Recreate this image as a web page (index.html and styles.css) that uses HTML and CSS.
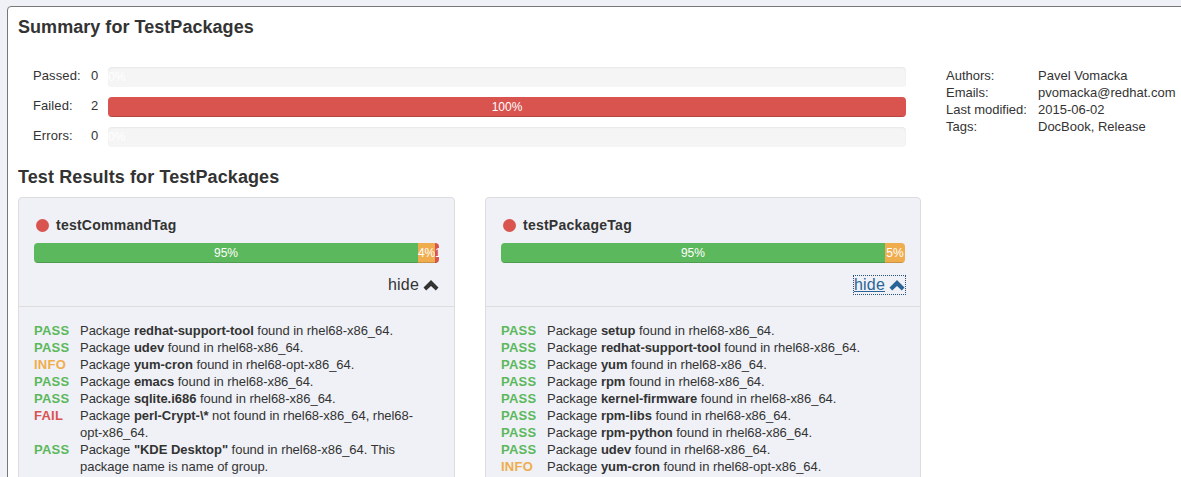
FILE: index.html
```html
<!DOCTYPE html>
<html>
<head>
<meta name="viewport" content="width=device-width, initial-scale=1">
<title>Summary for TestPackages</title>
<link rel="stylesheet" href="styles.css">
</head>
<body>

<div class="panel">
  <h3 class="summary-title">Summary for TestPackages</h3>

  <div class="summary">
    <div class="counts">
      <div class="count-row">
        <span class="count-label">Passed:</span>
        <span class="count-num">0</span>
        <div class="progress"><div class="bar bar-empty" style="width: 0%">0%</div></div>
      </div>
      <div class="count-row">
        <span class="count-label">Failed:</span>
        <span class="count-num">2</span>
        <div class="progress"><div class="bar bar-danger" style="width: 100%">100%</div></div>
      </div>
      <div class="count-row">
        <span class="count-label">Errors:</span>
        <span class="count-num">0</span>
        <div class="progress"><div class="bar bar-empty" style="width: 0%">0%</div></div>
      </div>
    </div>

    <div class="meta">
      <span>Authors:</span><span>Pavel Vomacka</span>
      <span>Emails:</span><span>pvomacka@redhat.com</span>
      <span>Last modified:</span><span>2015-06-02</span>
      <span>Tags:</span><span>DocBook, Release</span>
    </div>
  </div>

  <h3 class="results-title">Test Results for TestPackages</h3>

  <div class="cards">
    <div class="card">
      <div class="card-head">
        <h4 class="card-title"><span class="dot"></span>testCommandTag</h4>
        <div class="progress card-progress">
          <div class="bar bar-success" style="width: 94.8%">95%</div>
          <div class="bar bar-warning" style="width: 4.2%">4%</div>
          <div class="bar bar-danger" style="width: 1%">1%</div>
        </div>
        <div class="toggle">
          <a class="hide-link" href="#">hide <svg class="chevron" viewBox="0 0 16 11"><path d="M8 0 L15.5 7.5 L12.8 10.5 L8 6 L3.2 10.5 L0.5 7.5 Z"/></svg></a>
        </div>
      </div>
      <div class="card-body">
        <div class="result"><span class="status pass">PASS</span><p>Package <b>redhat-support-tool</b> found in rhel68-x86_64.</p></div>
        <div class="result"><span class="status pass">PASS</span><p>Package <b>udev</b> found in rhel68-x86_64.</p></div>
        <div class="result"><span class="status info">INFO</span><p>Package <b>yum-cron</b> found in rhel68-opt-x86_64.</p></div>
        <div class="result"><span class="status pass">PASS</span><p>Package <b>emacs</b> found in rhel68-x86_64.</p></div>
        <div class="result"><span class="status pass">PASS</span><p>Package <b>sqlite.i686</b> found in rhel68-x86_64.</p></div>
        <div class="result"><span class="status fail">FAIL</span><p>Package <b>perl-Crypt-\*</b> not found in rhel68-x86_64, rhel68-opt-x86_64.</p></div>
        <div class="result"><span class="status pass">PASS</span><p>Package <b>"KDE Desktop"</b> found in rhel68-x86_64. This package name is name of group.</p></div>
      </div>
    </div>

    <div class="card">
      <div class="card-head">
        <h4 class="card-title"><span class="dot"></span>testPackageTag</h4>
        <div class="progress card-progress">
          <div class="bar bar-success" style="width: 95%">95%</div>
          <div class="bar bar-warning" style="width: 5%">5%</div>
        </div>
        <div class="toggle">
          <a class="hide-link focused" href="#">hide <svg class="chevron" viewBox="0 0 16 11"><path d="M8 0 L15.5 7.5 L12.8 10.5 L8 6 L3.2 10.5 L0.5 7.5 Z"/></svg></a>
        </div>
      </div>
      <div class="card-body">
        <div class="result"><span class="status pass">PASS</span><p>Package <b>setup</b> found in rhel68-x86_64.</p></div>
        <div class="result"><span class="status pass">PASS</span><p>Package <b>redhat-support-tool</b> found in rhel68-x86_64.</p></div>
        <div class="result"><span class="status pass">PASS</span><p>Package <b>yum</b> found in rhel68-x86_64.</p></div>
        <div class="result"><span class="status pass">PASS</span><p>Package <b>rpm</b> found in rhel68-x86_64.</p></div>
        <div class="result"><span class="status pass">PASS</span><p>Package <b>kernel-firmware</b> found in rhel68-x86_64.</p></div>
        <div class="result"><span class="status pass">PASS</span><p>Package <b>rpm-libs</b> found in rhel68-x86_64.</p></div>
        <div class="result"><span class="status pass">PASS</span><p>Package <b>rpm-python</b> found in rhel68-x86_64.</p></div>
        <div class="result"><span class="status pass">PASS</span><p>Package <b>udev</b> found in rhel68-x86_64.</p></div>
        <div class="result"><span class="status info">INFO</span><p>Package <b>yum-cron</b> found in rhel68-opt-x86_64.</p></div>
      </div>
    </div>
  </div>
</div>

</body>
</html>
```

FILE: styles.css
```css
* {
  box-sizing: border-box;
}

html, body {
  height: 477px;
  overflow: hidden;
}

body {
  margin: 0;
  padding: 6px 0 0 7px;
  font-family: "Liberation Sans", Arial, sans-serif;
  font-size: 13px;
  line-height: 17px;
  color: #333;
  background-color: #eff1f6;
}

.panel {
  width: 1190px;
  height: 500px;
  padding: 0 10px;
  background-color: white;
  border: 1px solid #777;
  border-radius: 4px;
}

h3 {
  margin: 0;
  font-size: 18px;
  line-height: 20px;
  font-weight: bold;
}

.summary-title {
  margin-top: 10px;
  letter-spacing: .04px;
}

.summary {
  display: flex;
  margin-top: 30px;
}

.counts {
  width: 888px;
  flex-shrink: 0;
  padding-left: 15px;
}

.count-row {
  display: flex;
  height: 20px;
  margin-bottom: 10px;
  align-items: flex-start;
}

.count-label {
  width: 58px;
  letter-spacing: .1px;
}

.count-num {
  width: 17px;
}

.progress {
  display: flex;
  flex: 1;
  height: 20px;
  overflow: hidden;
  background-color: #f5f5f5;
  border-radius: 4px;
  box-shadow: inset 0 1px 2px rgba(0, 0, 0, .06);
}

.bar {
  font-size: 12px;
  line-height: 20px;
  color: white;
  text-align: center;
  box-shadow: inset 0 -1px 0 rgba(0, 0, 0, .15);
}

.bar-empty {
  text-align: left;
  box-shadow: none;
}

.bar-success {
  background-color: #5cb85c;
}

.bar-warning {
  background-color: #f0ad4e;
}

.bar-danger {
  background-color: #d9534f;
}

.meta {
  display: grid;
  grid-template-columns: 92px auto;
  grid-auto-rows: 17px;
  margin-left: 40px;
  white-space: nowrap;
}

.results-title {
  margin-top: 10px;
  letter-spacing: .1px;
}

.cards {
  display: flex;
  gap: 30px;
  margin-top: 10px;
}

.card {
  width: 437px;
  height: 400px;
  background-color: #eff1f6;
  border: 1px solid #ddd;
  border-radius: 4px;
}

.card + .card {
  width: 436px;
}

.card-head {
  height: 109px;
  padding: 15px 15px 0;
  border-bottom: 1px solid #ddd;
}

.card-title {
  display: flex;
  align-items: center;
  margin: 0;
  height: 24px;
  font-size: 14px;
  font-weight: bold;
  letter-spacing: .24px;
}

.dot {
  width: 13px;
  height: 13px;
  margin: 0 7px 0 2px;
  border-radius: 50%;
  background-color: #d9534f;
}

.card-progress {
  flex: none;
  margin-top: 6px;
}

.toggle {
  display: flex;
  justify-content: flex-end;
  margin-top: 13px;
}

.hide-link {
  display: flex;
  align-items: center;
  gap: 4px;
  font-size: 16px;
  line-height: 18px;
  letter-spacing: .2px;
  color: #333;
  text-decoration: none;
}

.hide-link.focused {
  color: #2a6496;
  text-decoration: underline;
  outline: 1px dotted #23527c;
}

.chevron {
  width: 16px;
  height: 11px;
  fill: currentColor;
}

.card-body {
  padding: 15px 15px 0;
}

.result {
  display: flex;
}

.result p {
  flex: 1;
  margin: 0;
  padding-right: 14px;
  letter-spacing: -.04px;
}

.status {
  width: 46px;
  flex-shrink: 0;
  font-weight: bold;
  letter-spacing: .25px;
}

.pass {
  color: #5cb85c;
}

.info {
  color: #f0ad4e;
}

.fail {
  color: #d9534f;
}
```
